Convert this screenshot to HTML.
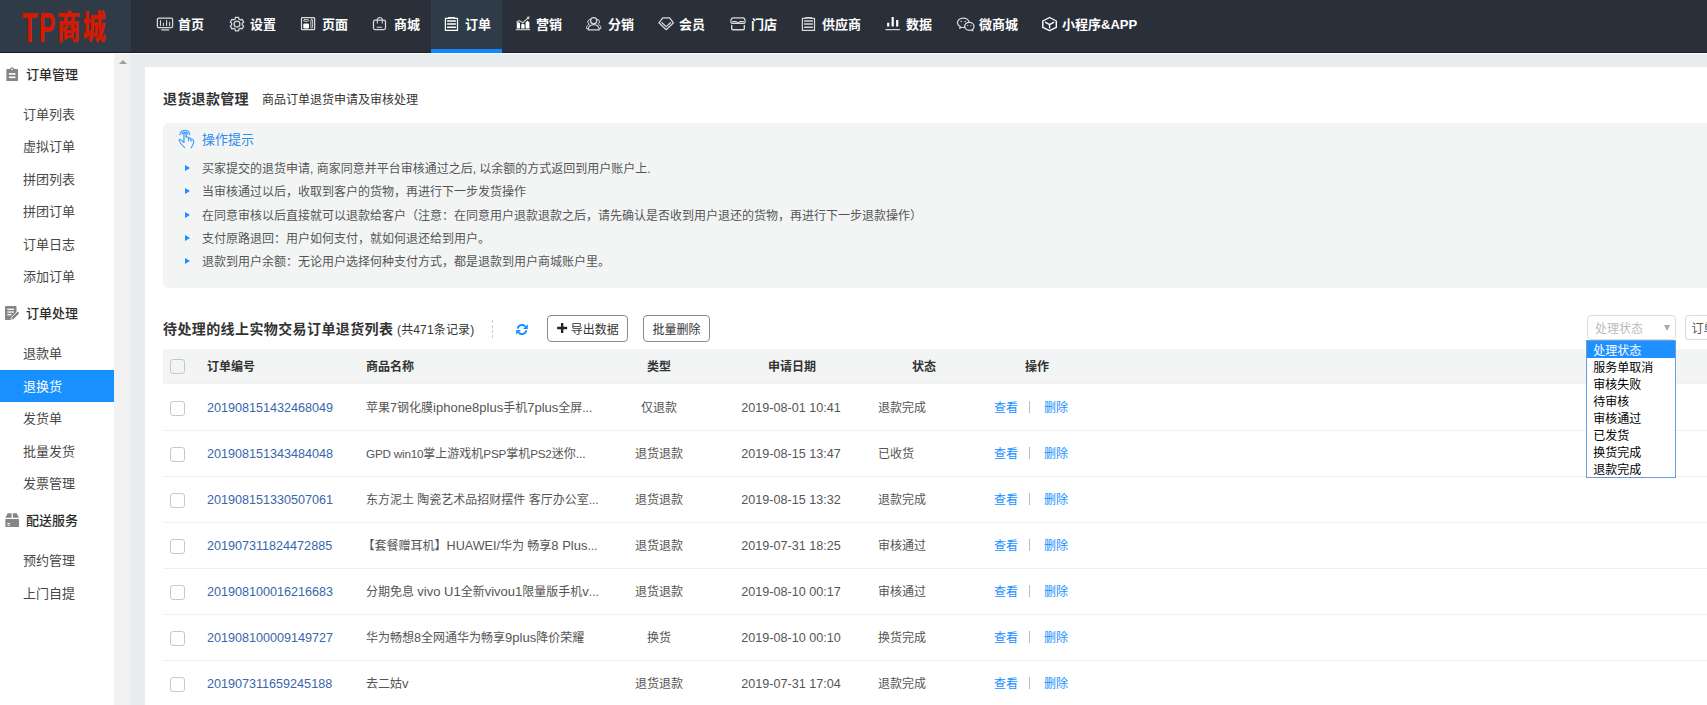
<!DOCTYPE html>
<html lang="zh-CN">
<head>
<meta charset="utf-8">
<title>退货退款管理</title>
<style>
*{box-sizing:border-box;margin:0;padding:0}
html,body{width:1707px;height:705px;overflow:hidden}
body{font-family:"Liberation Sans","Noto Sans CJK SC",sans-serif;font-size:12px;color:#333;background:#e9ecef;position:relative}
a{text-decoration:none;color:inherit}
ul{list-style:none}
i{font-style:normal}

/* top bar */
#top{position:absolute;left:0;top:0;width:1707px;height:53px;background:#2a303a;z-index:5;border-bottom:1px solid #1b2028}
#wl{position:absolute;left:0;top:53px;width:1707px;height:1px;background:#fbfbfb;z-index:6}
#logo{position:absolute;left:0;top:0;width:131px;height:52px;background:#2f3c47;color:#d41a03;font-weight:bold;overflow:hidden}
#logo span{position:absolute;white-space:nowrap;transform-origin:0 0;line-height:1}
#logo .a{left:21.5px;top:6.7px;font-size:42.5px;transform:scaleX(.59);letter-spacing:2.5px}
#logo .c{left:56.8px;top:12px;font-size:32.5px;transform:scaleX(.72);font-weight:900;letter-spacing:2.8px}
#nav{position:absolute;left:0;top:0;height:52px}
#nav a{position:absolute;top:0;height:52px;color:#fff;font-size:13px;font-weight:bold;line-height:50px;white-space:nowrap}
#nav a svg{position:absolute;left:0;top:16px;width:16px;height:16px;overflow:visible;fill:none;stroke:#d9d9d9;stroke-width:1.25;stroke-linejoin:round;stroke-linecap:round}
#nav a.on svg{stroke:#fff}
#nav b.act{position:absolute;top:0;height:53px;background:#2f3c47;border-bottom:4px solid #1089ff}
#nav a span{position:absolute;top:0}

/* sidebar */
#side{position:absolute;left:0;top:52px;width:114px;height:653px;background:#fff}
#sbar{position:absolute;left:114px;top:54px;width:17px;height:651px;background:#f1f1f1}
#sbar i{position:absolute;left:4.5px;top:5.5px;width:0;height:0;border:4px solid transparent;border-top:0;border-bottom:4.5px solid #a0a0a0}
#side .g{position:absolute;left:26px;font-size:13px;font-weight:500;color:#2b2b2b;line-height:20px;white-space:nowrap}
#side .g svg{position:absolute;top:2px}
#side .m{position:absolute;left:0;width:114px;height:32px;line-height:34px;padding-left:23px;font-size:13px;color:#484848;white-space:nowrap}
#side .m.on{background:#1890ff;color:#fff}

/* main panel */
#main{position:absolute;left:145px;top:67px;width:1562px;height:638px;background:#fff}
#ttl{position:absolute;left:18px;top:22px;letter-spacing:.3px;font-size:14px;font-weight:bold;color:#333;line-height:20px;white-space:nowrap}
#sub{position:absolute;left:117px;top:22.5px;font-size:12px;color:#333;line-height:20px;white-space:nowrap}
#tip{position:absolute;left:18px;top:56px;width:1544px;height:165px;background:#f3f5f5;border-radius:5px 0 0 5px}
#tip h4{position:absolute;left:39px;top:6.500px;font-size:13px;font-weight:normal;color:#2d8cf0;line-height:20px}
#tip svg{position:absolute;left:15px;top:6px;width:17px;height:20px}
#tip li{position:absolute;left:39px;font-size:12px;color:#555;line-height:20px;white-space:nowrap}
#tip li:before{content:"";position:absolute;left:-17px;top:6px;border:3.500px solid transparent;border-right:0;border-left:5px solid #1890ff}

/* toolbar */
#bar{position:absolute;left:18px;top:248px;width:1544px;height:28px}
#bar h3{position:absolute;left:0;top:3.700px;font-size:14px;font-weight:bold;color:#333;line-height:20px;letter-spacing:.4px;white-space:nowrap}
#bar .cnt{position:absolute;left:234px;top:5.300px;letter-spacing:.150px;font-size:12px;color:#333;line-height:20px;white-space:nowrap}
#bar .dash{position:absolute;left:329px;top:5px;width:0;height:18px;border-left:1px dashed #ccc}
#bar svg.rf{position:absolute;left:352.800px;top:8.800px;width:12px;height:11px}
.btn{position:absolute;top:0;height:27px;border:1px solid #8c8c8c;border-radius:4px;background:#fff;font-size:12px;color:#333;line-height:28.500px;text-align:center;white-space:nowrap}
.sel{position:absolute;top:0;height:25px;border:1px solid #dcdcdc;border-radius:4px;background:#fff;font-size:12px;line-height:23px;padding:2px 0 0 7px;white-space:nowrap;overflow:hidden}

/* table */
#tb{position:absolute;left:18px;top:282px;width:1544px;height:360px}
#th{position:absolute;left:0;top:0;width:1544px;height:35px;background:#f3f5f5;border-bottom:1px solid #f5eef0;font-weight:bold;color:#333;line-height:36px}
#th span{position:absolute;top:0;white-space:nowrap}
.cb{position:absolute;left:7px;width:15px;height:15px;border:1px solid #c8c8c8;border-radius:3px;background:#fff}
.tr{position:absolute;left:0;width:1544px;height:47px;border-bottom:1px solid #f5eef0;line-height:48px;color:#555}
.tr .cb{top:17px}
.l{font-size:13px}
.u{font-size:11.7px;letter-spacing:-.2px}
.h{font-size:12.6px}
.tr>*{position:absolute;top:0;white-space:nowrap}
.no{left:44px;color:#3a65ab;font-size:12.6px}
.nm{left:203px}
.ty{left:446px;width:100px;text-align:center}
.dt{left:568px;width:120px;text-align:center;font-size:12.6px}
.st{left:715px}
.op1{left:831px;color:#1890ff}
.op2{left:881px;color:#1890ff}
.tr .sp{left:866px;top:17px;width:1px;height:12px;background:#bbb}

/* dropdown */
#dd{position:absolute;left:1586px;top:340px;width:90px;height:138px;border:1px solid #6a9be0;background:#fff;z-index:9;font-size:12px;color:#000;line-height:17px}
#dd li{height:17px;padding:1.5px 0 0 6.200px;white-space:nowrap}
#dd li.on{background:#1e90ff;color:#fff}
</style>
</head>
<body>
<div id="top">
  <div id="logo"><span class="a">TP</span><span class="c">商城</span></div>
  <div id="nav">
    <a href="#" style="left:157px"><svg viewBox="0 0 16 16"><rect x=".4" y="2.2" width="15.2" height="9.4" rx="1.3"/><path d="M3.500 9.600V4.600M6.400 9.600V7.400M9.600 9.600V4.600M12.600 9.600V6.400" stroke-width="1.1"/><path d="M4.800 13.900h6.800" stroke-width="1.400"/></svg><span style="left:21px">首页</span></a>
    <a href="#" style="left:229px"><svg viewBox="0 0 16 16"><path d="M13.33 7.26 L14.69 6.05 L13.12 3.33 L11.40 3.90 L9.94 3.06 L9.57 1.28 L6.43 1.28 L6.06 3.06 L4.60 3.90 L2.88 3.33 L1.31 6.05 L2.67 7.26 L2.67 8.94 L1.31 10.15 L2.88 12.87 L4.60 12.30 L6.06 13.14 L6.43 14.92 L9.57 14.92 L9.94 13.14 L11.40 12.30 L13.12 12.87 L14.69 10.15 L13.33 8.94z"/><circle cx="8" cy="8.100" r="2.900"/></svg><span style="left:21px">设置</span></a>
    <a href="#" style="left:300px"><svg viewBox="0 0 16 16"><rect x="1.500" y="1.600" width="13.100" height="12" rx=".6"/><rect x="3.600" y="3.600" width="5" height="1.700" rx=".85" stroke-width=".9"/><rect x="3.300" y="7.400" width="5.700" height="5" rx="1.200" fill="#fff" stroke="none"/><rect x="10.900" y="3.400" width="1.700" height="8.600" rx=".5" stroke-width=".9"/></svg><span style="left:22px">页面</span></a>
    <a href="#" style="left:372px"><svg viewBox="0 0 16 16"><rect x="1.500" y="4.200" width="12" height="9.400" rx="1.500"/><path d="M5.300 7V4a2.500 2.500 0 0 1 5 0v3" stroke-width="1.100"/><path d="M5.200 11.300h4.500" stroke-width="1.100"/></svg><span style="left:22px">商城</span></a>
    <b class="act" style="left:431px;width:71px"></b>
    <a href="#" class="on" style="left:444px"><svg viewBox="0 0 16 16"><path d="M4.600 2.400H1.400v12h12.100v-12h-3.200"/><path d="M4.800 1.800h5.400" stroke-width="1.700"/><path d="M3.600 5h7.800M3.600 8.100h7.800M3.600 11.200h7.800" stroke-width="1.500"/></svg><span style="left:21px">订单</span></a>
    <a href="#" style="left:516px"><svg viewBox="0 0 16 16"><path d="M.2 13.700h13.600" stroke-width="1.200" stroke="#bdbdbd"/><path d="M.8 12.500V7.200L2.400 6 4 7.200v5.300zM5.200 12.500V8.400l1.700-.9 1.700.9v4.100zM9.600 12.500V6.400l1.900-1.800 1.900 1.800v6.100z" fill="#fff" stroke="none"/><path d="M.6 6.200l2.800-1.600 3.500 2.100 5-4.600" stroke-width="1.100"/><path d="M10.600 1l3-.4-.6 3z" fill="#d9d9d9" stroke="none"/></svg><span style="left:20px">营销</span></a>
    <a href="#" style="left:586px"><svg viewBox="0 0 16 16"><circle cx="7.700" cy="4.800" r="3.100"/><path d="M2.200 13.800c0-3.200 2.400-5.200 5.500-5.200s5.500 2 5.500 5.200z"/><path d="M4.400 3.300a2.600 2.600 0 0 0-1.200 4.900M2.600 8.600C1.200 9.400.4 10.800.4 12.600h1.400M11 3.300a2.600 2.600 0 0 1 1.200 4.900M12.800 8.600c1.400.8 2.200 2.200 2.200 4h-1.400" stroke-width="1"/></svg><span style="left:22px">分销</span></a>
    <a href="#" style="left:657px"><svg viewBox="0 0 16 16"><path d="M5.800 1.800h6.800l3.900 5-7.300 6.900-7.300-6.900z"/><path d="M4.900 6.700l4.300 3.900 4.300-3.900"/></svg><span style="left:22px">会员</span></a>
    <a href="#" style="left:730px"><svg viewBox="0 0 16 16"><path d="M3.200 1.900h9.600c1.300 0 2.300 1.800 2.300 3.800 0 1-.6 1.700-1.400 1.700H2.300C1.500 7.400.9 6.700.9 5.700c0-2 1-3.800 2.300-3.800z"/><path d="M2.600 5.600h3.600l1.800 1.500 1.800-1.500h3.600" stroke-width="1.100"/><path d="M1.700 9.400v3.200c0 .7.500 1.200 1.200 1.200h10.200c.7 0 1.200-.5 1.200-1.200V9.400" stroke-width="1.400"/></svg><span style="left:21px">门店</span></a>
    <a href="#" style="left:801px"><svg viewBox="0 0 16 16"><path d="M4.600 2.400H1.400v12h12.100v-12h-3.200"/><path d="M4.800 1.800h5.400" stroke-width="1.700"/><path d="M3.600 5h7.800M3.600 8.100h7.800M3.600 11.200h7.800" stroke-width="1.500"/></svg><span style="left:21px">供应商</span></a>
    <a href="#" style="left:885px"><svg viewBox="0 0 16 16"><path d="M.9 13.600h13.700" stroke-width="1.200" stroke="#d0d0d0"/><path d="M3.200 10.600V6.800M7.700 10.600V1.100M12.200 10.600V3.900" stroke-width="2.200" stroke="#fff" stroke-linecap="butt"/></svg><span style="left:21px">数据</span></a>
    <a href="#" style="left:957px"><svg viewBox="0 0 16 16"><path d="M8.200 11.200a7 7 0 0 1-2 .3c-.6 0-1.100-.1-1.600-.2l-1.900 1 .5-1.700C1.500 9.700.4 8.300.4 6.800.4 4.200 3 2.100 6.200 2.100c3 0 5.500 1.800 5.800 4.200"/><path d="M12.300 6.400c2.600 0 4.700 1.800 4.700 4 0 1.200-.6 2.300-1.600 3l.4 1.400-1.600-.8c-.6.200-1.200.3-1.900.3-2.600 0-4.700-1.800-4.700-4s2.100-3.900 4.700-3.900z"/><circle cx="4.200" cy="5.400" r=".75" fill="#d9d9d9" stroke="none"/><circle cx="8.100" cy="5.400" r=".75" fill="#d9d9d9" stroke="none"/><circle cx="10.700" cy="9.600" r=".65" fill="#d9d9d9" stroke="none"/><circle cx="13.900" cy="9.600" r=".65" fill="#d9d9d9" stroke="none"/></svg><span style="left:22px">微商城</span></a>
    <a href="#" style="left:1041px"><svg viewBox="0 0 16 16"><path d="M8.600 1.500l6.700 3.500v6.400l-6.700 3.200-6.800-3.200V5z" stroke="#fff" stroke-width="1.400"/><path d="M4.600 6.300l4 2.300 4-2.300M8.600 8.600v3.200" stroke="#fff" stroke-width="1.400"/></svg><span style="left:21px">小程序&amp;APP</span></a>
  </div>
</div>
<div id="wl"></div>
<div id="side">
  <div class="g" style="top:13px"><svg style="left:-20px;width:12.4px;height:14.4px" viewBox="0 0 14 16"><path fill="#858585" d="M1.600 2h2.900a2.600 2.600 0 0 1 5 0h2.900c.7 0 1.200.5 1.200 1.200v11.600c0 .7-.5 1.200-1.200 1.200H1.600c-.7 0-1.200-.5-1.200-1.200V3.200C.4 2.500.9 2 1.600 2z"/><circle cx="7" cy="2.600" r=".9" fill="#fff"/><rect x="3.300" y="6.800" width="7.400" height="1.800" fill="#fff"/><rect x="3.300" y="10.600" width="7.400" height="1.800" fill="#fff"/></svg>订单管理</div>
  <a href="#" class="m" style="top:46px">订单列表</a>
  <a href="#" class="m" style="top:78px">虚拟订单</a>
  <a href="#" class="m" style="top:111px">拼团列表</a>
  <a href="#" class="m" style="top:143px">拼团订单</a>
  <a href="#" class="m" style="top:176px">订单日志</a>
  <a href="#" class="m" style="top:208px">添加订单</a>
  <div class="g" style="top:252px"><svg style="left:-21px;width:14.400px;height:14.400px" viewBox="0 0 16 16"><path fill="#858585" d="M1.200 0h10.400c.7 0 1.200.5 1.200 1.200v7.400l-6.800 7.400H1.200C.5 16 0 15.500 0 14.800V1.200C0 .5.500 0 1.200 0z"/><rect x="2.600" y="3" width="7.400" height="1.400" fill="#fff"/><rect x="2.600" y="6" width="7.400" height="1.400" fill="#fff"/><rect x="2.600" y="9" width="4.600" height="1.400" fill="#fff"/><path fill="#858585" stroke="#fff" stroke-width=".9" d="M6.600 16l.9-3.600 6.600-6.600 2.300 2.300-6.600 6.600z"/></svg>订单处理</div>
  <a href="#" class="m" style="top:285px">退款单</a>
  <a href="#" class="m on" style="top:318px">退换货</a>
  <a href="#" class="m" style="top:350px">发货单</a>
  <a href="#" class="m" style="top:383px">批量发货</a>
  <a href="#" class="m" style="top:415px">发票管理</a>
  <div class="g" style="top:459px"><svg style="left:-21px;width:14.400px;height:14.400px" viewBox="0 0 16 16"><path fill="#858585" d="M3 .4h4.300v5H.4zM8.700.4H13l2.600 5H8.700zM.4 6.600h15.200v8.200c0 .7-.5 1.200-1.200 1.200H1.600c-.7 0-1.200-.5-1.200-1.200z"/><rect x="2.600" y="11.200" width="3" height="1" fill="#fff"/><rect x="2.600" y="13" width="3" height="1" fill="#fff"/></svg>配送服务</div>
  <a href="#" class="m" style="top:492px">预约管理</a>
  <a href="#" class="m" style="top:525px">上门自提</a>
</div>
<div id="sbar"><i></i></div>
<div id="main">
  <div id="ttl">退货退款管理</div>
  <div id="sub">商品订单退货申请及审核处理</div>
  <div id="tip">
    <svg viewBox="0 0 17 20" fill="none" stroke="#3d9bff" stroke-width="1.15" stroke-linecap="round" stroke-linejoin="round"><path d="M2 5.700A4.900 4.500 0 0 1 11.800 5.700M4.200 5.100A2.700 2 0 0 1 9.600 5.100"/><path d="M5.900 13.200V4.800a1.150 1.150 0 0 1 2.300 0v3.100" fill="#cfe4fb"/><path d="M8.200 7.900C9.200 7.600 10.300 8 10.600 9c.8-.2 1.900.2 2.300 1 .9-.1 2.100.4 2.600 1.400.5 1.200.1 3.600-2.200 7.400M10.500 9v2.700M12.900 10v2.300M5.900 13.300L2.600 10.600C1.800 10 .9 10.600 1.200 11.600 2 14 4.500 16.800 6.700 18.600"/></svg>
    <h4>操作提示</h4>
    <ul>
      <li style="top:36px">买家提交的退货申请, 商家同意并平台审核通过之后, 以余额的方式返回到用户账户上.</li>
      <li style="top:59px">当审核通过以后，收取到客户的货物，再进行下一步发货操作</li>
      <li style="top:83px">在同意审核以后直接就可以退款给客户（注意：在同意用户退款退款之后，请先确认是否收到用户退还的货物，再进行下一步退款操作）</li>
      <li style="top:106px">支付原路退回：用户如何支付，就如何退还给到用户。</li>
      <li style="top:129px">退款到用户余额：无论用户选择何种支付方式，都是退款到用户商城账户里。</li>
    </ul>
  </div>
  <div id="bar">
    <h3>待处理的线上实物交易订单退货列表</h3>
    <span class="cnt">(共471条记录)</span>
    <i class="dash"></i>
    <svg class="rf" viewBox="0 0 12 11" fill="none" stroke="#1890ff" stroke-width="2"><path d="M1.700 4.700A4.300 4.300 0 0 1 9.400 2.700M10.300 6.300A4.300 4.300 0 0 1 2.600 8.300"/><path d="M11.800.2v4.700H7zM.2 10.800V6.100H5z" fill="#1890ff" stroke="none"/></svg>
    <a href="#" class="btn" style="left:384px;width:81px"><svg viewBox="0 0 11 11" style="width:10.300px;height:10px;vertical-align:.8px;margin:0 3px 0 1px"><path d="M4.200 0h2.600v4.200H11v2.600H6.800V11H4.200V6.800H0V4.200h4.200z" fill="#222"/></svg>导出数据</a>
    <a href="#" class="btn" style="left:480px;width:67px">批量删除</a>
    <div class="sel" style="left:1424px;width:89px;color:#bbb">处理状态<i style="position:absolute;right:5px;top:9px;border:3.5px solid transparent;border-bottom:0;border-top:6px solid #aaa"></i></div>
    <div class="sel" style="left:1522px;width:40px;color:#555;border-right:0;border-radius:4px 0 0 4px;padding-left:5.500px">订单</div>
  </div>
  <div id="tb">
    <div id="th"><i class="cb" style="top:10px;background:transparent"></i><span style="left:44px">订单编号</span><span style="left:203px">商品名称</span><span style="left:484px">类型</span><span style="left:605px">申请日期</span><span style="left:749px">状态</span><span style="left:862px">操作</span></div>
    <div class="tr" style="top:35px"><i class="cb"></i><a href="#" class="no">201908151432468049</a><span class="nm">苹果<span class="h">7</span>钢化膜<span class="l">iphone8plus</span>手机<span class="l">7plus</span>全屏...</span><span class="ty">仅退款</span><span class="dt">2019-08-01 10:41</span><span class="st">退款完成</span><a href="#" class="op1">查看</a><i class="sp"></i><a href="#" class="op2">删除</a></div>
    <div class="tr" style="top:81px"><i class="cb"></i><a href="#" class="no">201908151343484048</a><span class="nm"><span class="u">GPD win10</span>掌上游戏机<span class="u">PSP</span>掌机<span class="u">PS2</span>迷你...</span><span class="ty">退货退款</span><span class="dt">2019-08-15 13:47</span><span class="st">已收货</span><a href="#" class="op1">查看</a><i class="sp"></i><a href="#" class="op2">删除</a></div>
    <div class="tr" style="top:127px"><i class="cb"></i><a href="#" class="no">201908151330507061</a><span class="nm">东方泥土 陶瓷艺术品招财摆件 客厅办公室...</span><span class="ty">退货退款</span><span class="dt">2019-08-15 13:32</span><span class="st">退款完成</span><a href="#" class="op1">查看</a><i class="sp"></i><a href="#" class="op2">删除</a></div>
    <div class="tr" style="top:173px"><i class="cb"></i><a href="#" class="no">201907311824472885</a><span class="nm"><span style="margin-left:-3.5px">【</span>套餐赠耳机】<span class="h">HUAWEI/</span>华为 畅享<span class="l">8 Plus</span>...</span><span class="ty">退货退款</span><span class="dt">2019-07-31 18:25</span><span class="st">审核通过</span><a href="#" class="op1">查看</a><i class="sp"></i><a href="#" class="op2">删除</a></div>
    <div class="tr" style="top:219px"><i class="cb"></i><a href="#" class="no">201908100016216683</a><span class="nm">分期免息 <span class="l">vivo U1</span>全新<span class="l">vivou1</span>限量版手机<span class="l">v</span>...</span><span class="ty">退货退款</span><span class="dt">2019-08-10 00:17</span><span class="st">审核通过</span><a href="#" class="op1">查看</a><i class="sp"></i><a href="#" class="op2">删除</a></div>
    <div class="tr" style="top:265px"><i class="cb"></i><a href="#" class="no">201908100009149727</a><span class="nm">华为畅想<span class="h">8</span>全网通华为畅享<span class="l">9plus</span>降价荣耀</span><span class="ty">换货</span><span class="dt">2019-08-10 00:10</span><span class="st">换货完成</span><a href="#" class="op1">查看</a><i class="sp"></i><a href="#" class="op2">删除</a></div>
    <div class="tr" style="top:311px"><i class="cb"></i><a href="#" class="no">201907311659245188</a><span class="nm">去二姑<span class="l">v</span></span><span class="ty">退货退款</span><span class="dt">2019-07-31 17:04</span><span class="st">退款完成</span><a href="#" class="op1">查看</a><i class="sp"></i><a href="#" class="op2">删除</a></div>
  </div>
</div>
<ul id="dd"><li class="on">处理状态</li><li>服务单取消</li><li>审核失败</li><li>待审核</li><li>审核通过</li><li>已发货</li><li>换货完成</li><li>退款完成</li></ul>
</body>
</html>
